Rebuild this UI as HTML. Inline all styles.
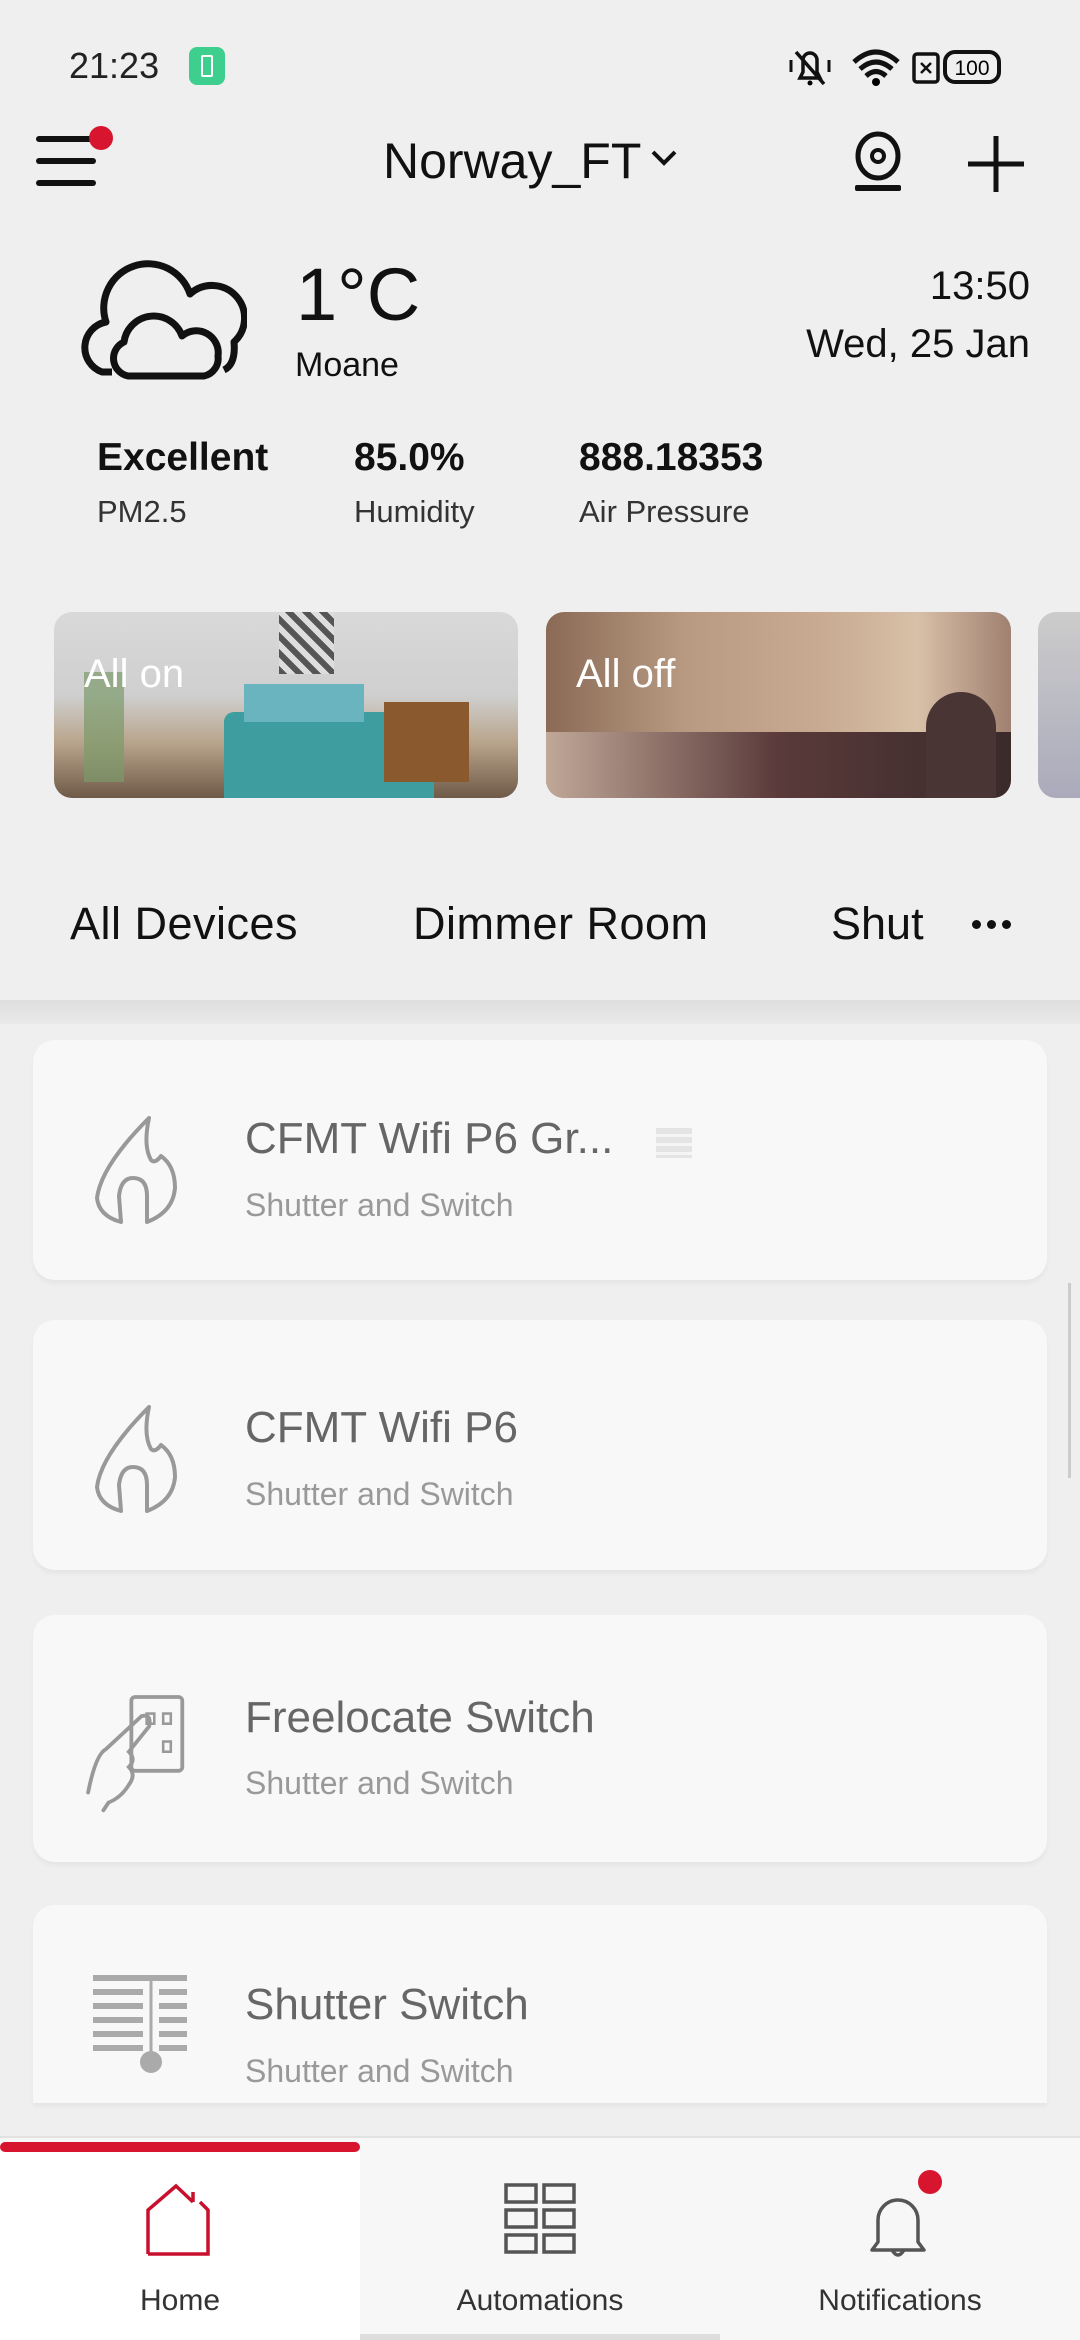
<!DOCTYPE html>
<html><head><meta charset="utf-8">
<style>
*{margin:0;padding:0;box-sizing:border-box}
body{width:1080px;height:2340px;background:#efefef;font-family:"Liberation Sans",sans-serif;position:relative;overflow:hidden;color:#111}
.a{position:absolute;white-space:nowrap}
.card{position:absolute;left:33px;width:1014px;background:#f8f8f8;border-radius:22px;box-shadow:0 4px 4px rgba(0,0,0,0.04)}
.t{position:absolute;left:212px;font-size:44px;color:#666}
.s{position:absolute;left:212px;font-size:32px;color:#999}
.ic{position:absolute;left:58px}
</style></head><body>
<!-- status bar -->
<div class="a" style="left:69px;top:45px;font-size:36px;color:#222">21:23</div>
<div class="a" style="left:189px;top:47px;width:36px;height:38px;background:#3ecf8e;border-radius:8px"></div>
<div class="a" style="left:201px;top:55px;width:12px;height:22px;border:2px solid #fff;border-radius:2px"></div>
<svg class="a" style="left:788px;top:46px" width="230" height="44" viewBox="0 0 230 44">
<path d="M12 32 L32 32 L29 26 L29 14 A7 7 0 0 0 15 14 L15 26 Z" fill="none" stroke="#111" stroke-width="3.5"/><line x1="8" y1="6" x2="36" y2="38" stroke="#111" stroke-width="3.5"/><circle cx="22" cy="37" r="2.5"/><path d="M3 14 v12 M41 14 v12" stroke="#111" stroke-width="3"/>
<path d="M66 16 Q88 -4 110 16 M72 23 Q88 9 104 23 M78 30 Q88 21 98 30" fill="none" stroke="#111" stroke-width="5"/><circle cx="88" cy="36" r="4"/>
<rect x="126" y="8" width="24" height="28" rx="3" fill="none" stroke="#111" stroke-width="3.5"/><path d="M133 17 l10 10 M143 17 l-10 10" stroke="#111" stroke-width="2.5"/>
<rect x="157" y="6" width="54" height="30" rx="10" fill="none" stroke="#111" stroke-width="4"/><text x="184" y="29" font-size="21" text-anchor="middle" font-family="Liberation Sans">100</text>
</svg>
<!-- header -->
<div class="a" style="left:36px;top:136px;width:60px;height:6px;background:#111;border-radius:3px"></div>
<div class="a" style="left:36px;top:158px;width:60px;height:6px;background:#111;border-radius:3px"></div>
<div class="a" style="left:36px;top:180px;width:60px;height:6px;background:#111;border-radius:3px"></div>
<div class="a" style="left:89px;top:126px;width:24px;height:24px;background:#d8152f;border-radius:50%"></div>
<div class="a" style="left:383px;top:132px;font-size:50px;color:#111">Norway_FT</div>
<svg class="a" style="left:650px;top:148px" width="28" height="20"><path d="M3 4 L14 15 L25 4" fill="none" stroke="#111" stroke-width="4"/></svg>
<svg class="a" style="left:853px;top:130px" width="50" height="66"><ellipse cx="25" cy="26" rx="20" ry="22" fill="none" stroke="#111" stroke-width="5"/><circle cx="25" cy="26" r="6" fill="none" stroke="#111" stroke-width="4"/><rect x="2" y="55" width="46" height="6" rx="2" fill="#111"/></svg>
<svg class="a" style="left:966px;top:134px" width="60" height="60"><path d="M30 2 V58 M2 30 H58" stroke="#111" stroke-width="5"/></svg>
<!-- weather -->
<svg class="a" style="left:72px;top:252px" width="175" height="130" viewBox="0 0 175 130">
<path d="M40 120 L30 120 A26 26 0 0 1 34 70 A44 44 0 0 1 118 42 A28 28 0 0 1 162 90 Q164 112 152 118" fill="none" stroke="#111" stroke-width="7" stroke-linejoin="round"/>
<path d="M56 124 A18 18 0 0 1 52 90 A30 30 0 0 1 110 84 A22 22 0 0 1 146 104 A18 18 0 0 1 132 124 Z" fill="#efefef" stroke="#111" stroke-width="7" stroke-linejoin="round"/>
</svg>
<div class="a" style="left:296px;top:252px;font-size:74px;color:#111">1°C</div>
<div class="a" style="left:295px;top:346px;font-size:34px;color:#111">Moane</div>
<div class="a" style="right:50px;top:264px;font-size:40px;color:#111">13:50</div>
<div class="a" style="right:50px;top:322px;font-size:40px;color:#111">Wed, 25 Jan</div>
<div class="a" style="left:97px;top:436px;font-size:39px;font-weight:bold">Excellent</div>
<div class="a" style="left:97px;top:494px;font-size:31px;color:#333">PM2.5</div>
<div class="a" style="left:354px;top:436px;font-size:39px;font-weight:bold">85.0%</div>
<div class="a" style="left:354px;top:494px;font-size:31px;color:#333">Humidity</div>
<div class="a" style="left:579px;top:436px;font-size:39px;font-weight:bold">888.18353</div>
<div class="a" style="left:579px;top:494px;font-size:31px;color:#333">Air Pressure</div>
<!-- scenes -->
<div class="a" style="left:54px;top:612px;width:464px;height:186px;border-radius:18px;overflow:hidden;background:linear-gradient(180deg,#d9d9d9 0%,#cfcfcf 45%,#b9a58c 70%,#6f5a48 100%)">
 <div class="a" style="left:170px;top:100px;width:210px;height:86px;background:#3e9d9e;border-radius:10px 10px 0 0"></div>
 <div class="a" style="left:190px;top:72px;width:120px;height:38px;background:#69b4bf"></div>
 <div class="a" style="left:225px;top:0;width:55px;height:62px;background:repeating-linear-gradient(45deg,#555 0 6px,#ddd 6px 12px)"></div>
 <div class="a" style="left:330px;top:90px;width:85px;height:80px;background:#8a5a2e"></div>
 <div class="a" style="left:30px;top:60px;width:40px;height:110px;background:#7a9a6a;opacity:.7"></div>
 <div class="a" style="left:30px;top:40px;font-size:40px;color:#fff">All on</div>
</div>
<div class="a" style="left:546px;top:612px;width:465px;height:186px;border-radius:18px;overflow:hidden;background:linear-gradient(90deg,#8a6a55 0%,#b89a82 30%,#c8ab92 60%,#d8c0a8 80%,#a08070 100%)">
 <div class="a" style="left:0;top:120px;width:465px;height:66px;background:linear-gradient(90deg,#c0a898,#5a3a3a 50%,#3a2a2a)"></div>
 <div class="a" style="left:380px;top:80px;width:70px;height:106px;background:#4a3535;border-radius:35px 35px 0 0"></div>
 <div class="a" style="left:30px;top:40px;font-size:40px;color:#fff">All off</div>
</div>
<div class="a" style="left:1038px;top:612px;width:60px;height:186px;border-radius:18px;background:linear-gradient(180deg,#ccc,#aab)"></div>
<!-- tabs -->
<div class="a" style="left:70px;top:898px;font-size:45px;letter-spacing:0.5px">All Devices</div>
<div class="a" style="left:413px;top:898px;font-size:45px;letter-spacing:0.5px">Dimmer Room</div>
<div class="a" style="left:831px;top:898px;font-size:45px">Shut</div>
<div class="a" style="left:972px;top:920px;width:9px;height:9px;background:#111;border-radius:50%"></div>
<div class="a" style="left:987px;top:920px;width:9px;height:9px;background:#111;border-radius:50%"></div>
<div class="a" style="left:1002px;top:920px;width:9px;height:9px;background:#111;border-radius:50%"></div>
<div class="a" style="left:0;top:1000px;width:1080px;height:24px;background:linear-gradient(#dedede,#e9e9e9)"></div>
<!-- device cards -->
<div class="card" style="top:1040px;height:240px">
 <svg class="ic" style="top:76px" width="100" height="110"><path d="M58 2 Q10 50 6 82 Q8 100 30 106 L28 80 Q30 62 42 62 Q56 62 56 80 L56 106 Q82 96 84 72 Q84 50 70 40 Q64 48 60 44 Q52 30 58 2Z" fill="none" stroke="#999" stroke-width="4" stroke-linejoin="round"/></svg>
 <div class="t" style="top:74px">CFMT Wifi P6 Gr...</div>
 <div class="a" style="left:623px;top:88px;width:36px;height:30px;background:repeating-linear-gradient(#e4e4e4 0 6px,#f5f5f5 6px 9px)"></div>
 <div class="s" style="top:147px">Shutter and Switch</div>
</div>
<div class="card" style="top:1320px;height:250px">
 <svg class="ic" style="top:85px" width="100" height="110"><path d="M58 2 Q10 50 6 82 Q8 100 30 106 L28 80 Q30 62 42 62 Q56 62 56 80 L56 106 Q82 96 84 72 Q84 50 70 40 Q64 48 60 44 Q52 30 58 2Z" fill="none" stroke="#999" stroke-width="4" stroke-linejoin="round"/></svg>
 <div class="t" style="top:83px">CFMT Wifi P6</div>
 <div class="s" style="top:156px">Shutter and Switch</div>
</div>
<div class="card" style="top:1615px;height:247px">
 <svg class="ic" style="top:78px;left:50px" width="140" height="120" viewBox="0 0 110 94"><rect x="38" y="3" width="40" height="58" rx="3" fill="none" stroke="#999" stroke-width="3"/><rect x="50" y="16" width="6" height="8" fill="none" stroke="#999" stroke-width="2"/><rect x="63" y="16" width="6" height="8" fill="none" stroke="#999" stroke-width="2"/><rect x="63" y="38" width="6" height="8" fill="none" stroke="#999" stroke-width="2"/><path d="M4 78 Q10 48 18 44 L46 18 Q54 16 52 26 L36 46 Q42 52 36 58 Q42 64 36 72 Q30 82 20 86 L16 92" fill="none" stroke="#999" stroke-width="3" stroke-linecap="round"/></svg>
 <div class="t" style="top:78px">Freelocate Switch</div>
 <div class="s" style="top:150px">Shutter and Switch</div>
</div>
<div class="card" style="top:1905px;height:198px;border-radius:22px 22px 0 0">
 <svg class="ic" style="top:70px;left:58px" width="100" height="100"><path d="M2 3 H96 M2 17 H52 M2 31 H52 M2 45 H52 M2 59 H52 M2 73 H52 M68 17 H96 M68 31 H96 M68 45 H96 M68 59 H96 M68 73 H96" stroke="#aaa" stroke-width="6"/><line x1="60" y1="3" x2="60" y2="85" stroke="#aaa" stroke-width="3"/><circle cx="60" cy="87" r="11" fill="#aaa"/></svg>
 <div class="t" style="top:75px">Shutter Switch</div>
 <div class="s" style="top:148px">Shutter and Switch</div>
</div>
<div class="a" style="left:1068px;top:1283px;width:3px;height:195px;background:#ccc"></div>
<!-- bottom nav -->
<div class="a" style="left:0;top:2136px;width:1080px;height:204px;background:#f7f7f7;border-top:2px solid #e2e2e2"></div>
<div class="a" style="left:0;top:2142px;width:360px;height:198px;background:#fff"></div>
<div class="a" style="left:0;top:2142px;width:360px;height:10px;background:#d8152f;border-radius:5px"></div>
<svg class="a" style="left:143px;top:2182px" width="70" height="76"><path d="M5 72 V28 L33 4 L50 20 M5 72 H65 V28 L57 20" fill="none" stroke="#c8102e" stroke-width="3.5"/><path d="M50 20 V10" stroke="#c8102e" stroke-width="3.5"/></svg>
<svg class="a" style="left:504px;top:2183px" width="72" height="72"><g fill="none" stroke="#555" stroke-width="3.5"><rect x="2" y="2" width="30" height="17"/><rect x="40" y="2" width="30" height="17"/><rect x="2" y="27" width="30" height="17"/><rect x="40" y="27" width="30" height="17"/><rect x="2" y="52" width="30" height="17"/><rect x="40" y="52" width="30" height="17"/></g></svg>
<svg class="a" style="left:866px;top:2190px" width="64" height="70"><path d="M6 60 L12 52 V30 A20 20 0 0 1 52 30 V52 L58 60 Z M26 60 Q32 70 38 60" fill="none" stroke="#555" stroke-width="3.5" stroke-linejoin="round"/></svg>
<div class="a" style="left:918px;top:2170px;width:24px;height:24px;background:#d8152f;border-radius:50%"></div>
<div class="a" style="left:0;width:360px;top:2284px;text-align:center;font-size:30px;color:#333">Home</div>
<div class="a" style="left:360px;width:360px;top:2284px;text-align:center;font-size:30px;color:#333">Automations</div>
<div class="a" style="left:720px;width:360px;top:2284px;text-align:center;font-size:30px;color:#333">Notifications</div>
<div class="a" style="left:360px;top:2334px;width:360px;height:6px;background:#ddd"></div>
</body></html>
